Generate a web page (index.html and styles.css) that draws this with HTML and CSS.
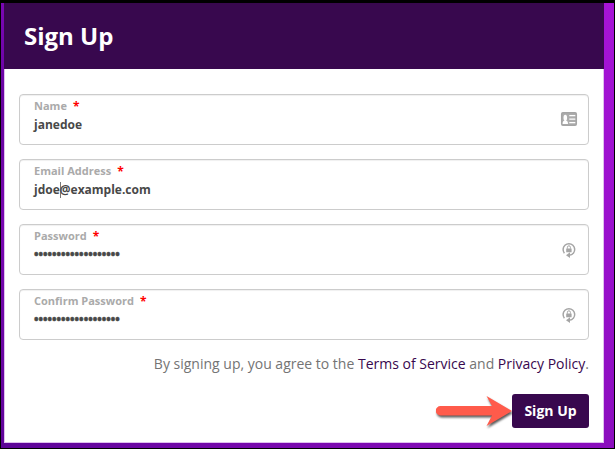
FILE: index.html
```html
<!DOCTYPE html>
<html lang="en">
<head>
<meta charset="utf-8">
<title>Sign Up</title>
<link rel="stylesheet" href="styles.css">
</head>
<body>
<main class="backdrop">
  <section class="card">
    <header class="card-header"><h1>Sign Up</h1></header>
    <form class="form">
      <div class="field">
        <div class="field-text">
          <div class="label"><span>Name</span><span class="req">*</span></div>
          <div class="value">janedoe</div>
        </div>
        <svg class="icon" width="18" height="16" viewBox="0 0 18 16">
          <rect x="1.700" y="1.700" width="14.600" height="12.600" rx="1.200" fill="#adadad" stroke="#a5a5a5" stroke-width="1.500"/>
          <path d="M2.600 12.900c0-2 .6-2.800 1.900-3.300-.8-.7-1-1.700-1-2.900 0-1.900.7-3 1.800-3s1.800 1.100 1.800 3c0 1.200-.2 2.200-1 2.900 1.300.5 1.900 1.300 1.900 3.300z" fill="#fff"/>
          <path d="M9.300 4.600h6M9.300 8.100h6M9.300 11.600h6" stroke="#fff" stroke-width="1.300"/>
        </svg>
      </div>
      <div class="field">
        <div class="field-text">
          <div class="label"><span>Email Address</span><span class="req">*</span></div>
          <div class="value">jdoe<span class="caret"></span>@example.com</div>
        </div>
      </div>
      <div class="field">
        <div class="field-text">
          <div class="label"><span>Password</span><span class="req">*</span></div>
          <div class="value dots">•••••••••••••••••••</div>
        </div>
        <svg class="icon" width="18" height="18" viewBox="0 0 18 18">
          <path d="M4.400 12.200A5.800 5.800 0 1 1 13.400 12.200Q12.200 14 9 14.200" fill="none" stroke="#a5a5a5" stroke-width="1.500"/>
          <path d="M6 14.200l4-2.900v5.800z" fill="#a5a5a5"/>
          <rect x="6.200" y="7.500" width="5.400" height="3.800" rx=".3" fill="#a5a5a5"/>
          <path d="M7.400 7.700V6.300a1.500 1.500 0 0 1 3 0v1.400" fill="none" stroke="#a5a5a5"/>
        </svg>
      </div>
      <div class="field">
        <div class="field-text">
          <div class="label"><span>Confirm Password</span><span class="req">*</span></div>
          <div class="value dots">•••••••••••••••••••</div>
        </div>
        <svg class="icon" width="18" height="18" viewBox="0 0 18 18">
          <path d="M4.400 12.200A5.800 5.800 0 1 1 13.400 12.200Q12.200 14 9 14.200" fill="none" stroke="#a5a5a5" stroke-width="1.500"/>
          <path d="M6 14.200l4-2.900v5.800z" fill="#a5a5a5"/>
          <rect x="6.200" y="7.500" width="5.400" height="3.800" rx=".3" fill="#a5a5a5"/>
          <path d="M7.400 7.700V6.300a1.500 1.500 0 0 1 3 0v1.400" fill="none" stroke="#a5a5a5"/>
        </svg>
      </div>
      <p class="terms">By signing up, you agree to the <a>Terms of Service</a> and <a>Privacy Policy</a>.</p>
      <div class="actions">
        <svg class="arrow" width="82" height="38" viewBox="0 0 82 38">
          <path d="M4.500 14H56L50.500 4 76 19 50.500 34 56 23.500H4.500A4.700 4.700 0 0 1 4.500 14Z" fill="#ff5b4b"/>
        </svg>
        <button class="submit" type="button">Sign Up</button>
      </div>
    </form>
  </section>
</main>
</body>
</html>
```

FILE: styles.css
```css
* { box-sizing: border-box; }
body {
  margin: 0;
  background: #000;
  font-family: "Open Sans", sans-serif;
}
.backdrop {
  height: 449px;
  padding: 0 10px 5px 3px;
  border: solid #000;
  border-width: 3px 1px 1px;
  background:
    linear-gradient(#a614d6, #9810cc 60%, #8b0ebe) right / 10px 100% no-repeat,
    linear-gradient(90deg, #5c0597, #7608ac 40%, #8b0ebe) bottom / 100% 5px no-repeat,
    linear-gradient(#7a07b4, #66049e 25%, #7807b0 50%, #5f0498);
}
.card {
  height: 440px;
  background: #fff;
  box-shadow: inset 1px 0 #dfbfee, inset -1px -1px #dfbfee;
}
.card-header {
  display: flex;
  align-items: center;
  height: 66px;
  padding-left: 20px;
  background: #38084e;
}
h1 {
  margin: 0;
  color: #fff;
  font-size: 24px;
  line-height: 32px;
  font-weight: 700;
}
.form { padding: 25px 15px 0; }
.field {
  display: flex;
  justify-content: space-between;
  height: 51px;
  margin-bottom: 14px;
  padding: 3px 10px 0 14px;
  border: 1px solid #ccc;
  border-radius: 4px;
  box-shadow: inset 0 1px 1px #f0f0f0;
}
.label {
  display: flex;
  gap: 6px;
  color: #aaa;
  font-size: 11px;
  line-height: 16px;
  font-weight: 700;
}
.req {
  margin-top: 1px;
  height: 15px;
  color: #f00;
  font-size: 12px;
}
.value {
  margin-top: 3px;
  color: #484848;
  font-size: 12px;
  line-height: 16px;
  font-weight: 700;
  white-space: nowrap;
}
.dots { -webkit-text-stroke: .5px #484848; }
.caret {
  display: inline-block;
  width: 1px;
  height: 16px;
  margin-right: -1px;
  background: #777;
  vertical-align: top;
}
.icon { margin-top: 13px; }
.terms {
  margin: 0;
  color: #747474;
  font-size: 14px;
  line-height: 20px;
  text-align: right;
  white-space: nowrap;
}
.terms a { color: #38084e; }
.actions {
  display: flex;
  justify-content: flex-end;
  align-items: center;
  height: 34px;
  margin-top: 20px;
}
.arrow {
  margin: -2px -6px -2px 0;
  filter: drop-shadow(1px 2px 1px rgba(0, 0, 0, .65));
}
.submit {
  width: 77px;
  height: 34px;
  padding: 0;
  border: 0;
  border-radius: 3px;
  background: #38084e;
  color: #fff;
  font: 700 14px/20px "Open Sans", sans-serif;
}
```
